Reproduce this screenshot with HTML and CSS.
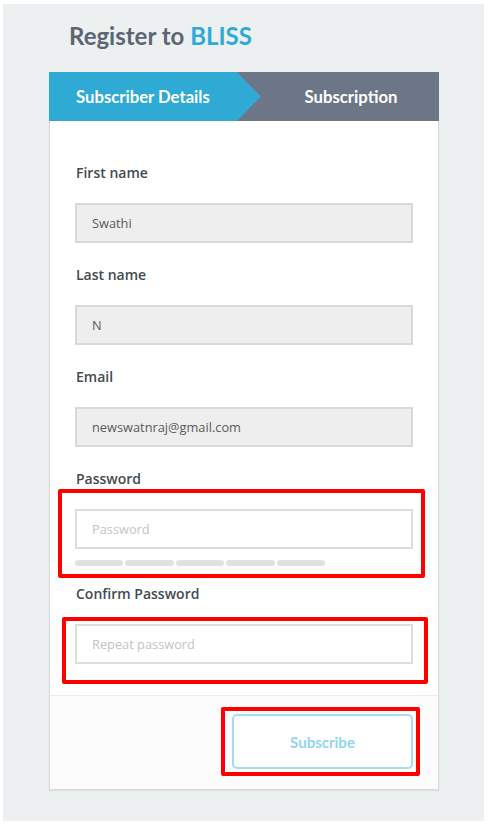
FILE: index.html
```html
<!DOCTYPE html>
<html>
<head>
<meta charset="utf-8">
<link rel="stylesheet" href="styles.css">
</head>
<body>
<div class="page">
  <h1 class="title">Register to <span class="brand">BLISS</span></h1>
  <div class="card">
    <div class="steps">
      <div class="step step-active">Subscriber Details</div>
      <div class="step step-next">Subscription</div>
    </div>
    <div class="form">
      <div class="group">
        <label class="label">First name</label>
        <div class="input input-filled">Swathi</div>
      </div>
      <div class="group">
        <label class="label">Last name</label>
        <div class="input input-filled">N</div>
      </div>
      <div class="group">
        <label class="label">Email</label>
        <div class="input input-filled">newswatnraj@gmail.com</div>
      </div>
      <div class="group group-pw">
        <label class="label">Password</label>
        <div class="field-wrap">
          <div class="input input-empty">Password</div>
          <div class="strength">
            <span class="bar"></span><span class="bar"></span><span class="bar"></span><span class="bar"></span><span class="bar"></span>
          </div>
          <div class="mark mark-pw"></div>
        </div>
      </div>
      <div class="group group-confirm">
        <label class="label">Confirm Password</label>
        <div class="field-wrap">
          <div class="input input-empty">Repeat password</div>
          <div class="mark mark-confirm"></div>
        </div>
      </div>
    </div>
    <div class="footer">
      <div class="btn-wrap">
        <button class="btn">Subscribe</button>
        <div class="mark mark-btn"></div>
      </div>
    </div>
  </div>
</div>
</body>
</html>
```
FILE: styles.css
```css
* { box-sizing: border-box; }
html, body { margin: 0; padding: 0; background: #ffffff; }
body { width: 488px; height: 827px; overflow: hidden; }
.page {
  margin: 4px 0 0 3px;
  width: 481px;
  height: 817px;
  background: #ecf0f1;
  padding: 17px 0 0 46px;
}
.title {
  margin: 0 0 22px 20px;
  font-family: Lato, "Open Sans", sans-serif;
  font-weight: 700;
  font-size: 24px;
  line-height: 29px;
  color: #5d6573;
}
.brand { color: #2eaad4; }
.card {
  width: 390px;
  background: #ffffff;
  border: 1px solid #d8d8d8;
  border-top: none;
  box-shadow: 0 1px 1px rgba(0,0,0,0.06);
}
.steps {
  display: flex;
  height: 49px;
  margin: 0 -1px;
  background: #6c7687;
  font-family: Lato, "Open Sans", sans-serif;
  font-weight: 700;
  font-size: 16.7px;
  color: #ffffff;
}
.step { display: flex; align-items: center; }
.step-active {
  width: 212px;
  padding-left: 27px;
  background: #2eaad4;
  clip-path: polygon(0 0, 188px 0, 212px 50%, 188px 100%, 0 100%);
}
.step-next {
  flex: 1;
  justify-content: center;
  padding-left: 2px;
}
.form { padding: 42px 25px 31px 25px; }
.group { margin-bottom: 22px; }
.group:last-child { margin-bottom: 0; }
.label {
  display: block;
  font-family: "Open Sans", sans-serif;
  font-weight: 600;
  font-size: 14px;
  line-height: 20px;
  color: #444a4f;
  margin-bottom: 20px;
  padding-left: 1px;
}
.input {
  height: 40px;
  padding: 0 15px;
  display: flex;
  align-items: center;
  font-family: "Open Sans", sans-serif;
  font-size: 12.8px;
}
.input-filled {
  background: #eeeeee;
  border: 2px solid #d9d9d9;
  color: #5a5a5a;
}
.input-empty {
  background: #ffffff;
  border: 2px solid #dddddd;
  color: #c4c4c4;
}
.field-wrap { position: relative; }
.strength {
  display: flex;
  gap: 2px;
  margin-top: 11px;
  width: 250px;
}
.bar {
  flex: 1;
  height: 6px;
  border-radius: 3px;
  background: #e1e1e1;
}
.group-pw { margin-bottom: 18px; }
.footer {
  border-top: 1px solid #ececec;
  background: #fcfcfc;
  padding: 18px 25px 20px 0;
  display: flex;
  justify-content: flex-end;
}
.btn-wrap { position: relative; }
.btn {
  display: block;
  width: 181px;
  height: 55px;
  background: #ffffff;
  border: 2px solid #a6dcf2;
  border-radius: 5px;
  font-family: Lato, "Open Sans", sans-serif;
  font-weight: 700;
  font-size: 15px;
  color: #93d4ef;
  padding: 0;
}
.mark {
  position: absolute;
  border: 4px solid #ff0000;
  border-radius: 2px;
  pointer-events: none;
}
.mark-pw { top: -20px; bottom: -12px; left: -17px; right: -12px; }
.mark-confirm { top: -7px; bottom: -20px; left: -13px; right: -15px; }
.mark-btn { top: -7px; bottom: -7px; left: -11px; right: -7px; }
```
